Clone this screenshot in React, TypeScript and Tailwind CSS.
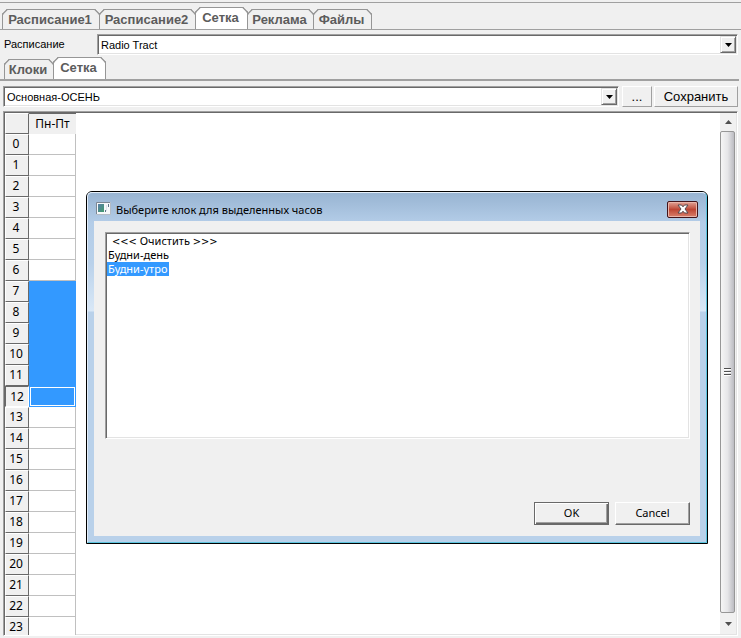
import * as React from "react";
import clsx from "clsx";

const SUNKEN =
  "border border-t-[#a0a0a0] border-l-[#a0a0a0] border-r-white border-b-white bg-white p-px shadow-[inset_1px_1px_#696969,inset_-1px_-1px_#e3e3e3]";
const RAISED =
  "border border-t-white border-l-white border-r-[#a0a0a0] border-b-[#a0a0a0] bg-[#f0f0f0]";

const mainTabs = [
  { label: "Расписание1", width: "w-[98px]" },
  { label: "Расписание2", width: "w-[97px]" },
  { label: "Сетка", width: "w-[53px]" },
  { label: "Реклама", width: "w-[67px]" },
  { label: "Файлы", width: "w-[59px]" },
];

const subTabs = [
  { label: "Клоки", width: "w-[50px]" },
  { label: "Сетка", width: "w-[53px]" },
];

const hours = Array.from({ length: 24 }, (_, hour) => hour);
const currentHour = 12;
const isSelected = (hour: number) => hour >= 7 && hour <= currentHour;

const Arrows: React.FC<{ children: string }> = ({ children }) => (
  <span className="font-['DejaVu_Sans_Condensed','DejaVu_Sans',sans-serif]">
    {children}
  </span>
);

const clocks = [
  {
    id: "clear",
    label: (
      <>
        <Arrows>{"<<<"}</Arrows> Очистить <Arrows>{">>>"}</Arrows>
      </>
    ),
  },
  { id: "day", label: "Будни-день" },
  { id: "morning", label: "Будни-утро" },
];

const Tabs: React.FC<{
  tabs: { label: string; width: string }[];
  active: string;
  thick?: boolean;
}> = ({ tabs, active, thick = false }) => (
  <div
    role="tablist"
    className={clsx(
      "flex items-end border-[#a0a0a0]",
      thick ? "border-b-2 pl-1" : "border-b pl-[2px]"
    )}
  >
    {tabs.map(({ label, width }) => (
      <button
        key={label}
        type="button"
        role="tab"
        aria-selected={label === active}
        className={clsx(
          "-mr-px shrink-0 rounded-t-[5px] [corner-shape:bevel] border border-b-0 border-[#969696] pr-[2px] text-center text-[13px] leading-[18px] font-bold whitespace-nowrap text-[#5c5c5c]",
          width,
          label === active ? "h-[22px] bg-white pb-[2px]" : "h-5 bg-[#f0f0f0]"
        )}
      >
        {label}
      </button>
    ))}
  </div>
);

const ComboBox: React.FC<{ id: string; label?: string; value: string }> = ({
  id,
  label,
  value,
}) => (
  <div className={clsx("flex h-[21px] min-w-0 flex-1", SUNKEN)}>
    <select
      id={id}
      aria-label={label}
      defaultValue={value}
      className="min-w-0 flex-1 appearance-none bg-transparent pt-px pl-[2px] text-[11px] leading-4 text-black outline-none"
    >
      <option>{value}</option>
    </select>
    <span className="pointer-events-none flex w-4 items-center justify-center border border-t-[#e3e3e3] border-r-[#696969] border-b-[#696969] border-l-[#e3e3e3] bg-[#f0f0f0] shadow-[inset_1px_1px_#fff,inset_-1px_-1px_#a0a0a0]">
      <svg width="7" height="4" viewBox="0 0 7 4" aria-hidden="true">
        <path d="M0 0h7L3.5 4z" fill="#000" />
      </svg>
    </span>
  </div>
);

const HourGrid = () => (
  <table className="w-[71px] table-fixed border-separate border-spacing-0 self-start font-['Noto_Sans',sans-serif] text-[12px] leading-4 text-black">
    <thead>
      <tr className="h-[21px]">
        <th
          aria-label="Час"
          className="w-6 border border-t-white border-l-white border-r-[#696969] border-b-[#696969] bg-[#f0f0f0] p-0"
        />
        <th
          scope="col"
          className="border-t border-t-[#696969] bg-[#f0f0f0] p-0 text-center font-normal"
        >
          Пн-Пт
        </th>
      </tr>
    </thead>
    <tbody>
      {hours.map((hour) => (
        <tr key={hour} className="h-[21px]">
          <th
            scope="row"
            className={clsx(
              "border bg-[#f0f0f0] p-0 text-center font-normal",
              hour === currentHour
                ? "border-t-[#696969] border-l-[#696969] border-r-white border-b-white"
                : "border-t-white border-l-white border-r-[#696969] border-b-[#696969] pr-[2px] pb-[2px]"
            )}
          >
            {hour}
          </th>
          <td
            className={clsx(
              "border-r border-b p-0",
              isSelected(hour)
                ? "border-[#3399ff] bg-[#3399ff]"
                : "border-[#c0c0c0] bg-white",
              hour === currentHour && "outline outline-white -outline-offset-2"
            )}
          />
        </tr>
      ))}
    </tbody>
  </table>
);

const ScrollBar = () => (
  <div
    aria-hidden="true"
    className="ml-auto flex w-4 flex-col items-center bg-[#f1f1f1]"
  >
    <span className="flex h-[18px] items-center">
      <svg width="7" height="4" viewBox="0 0 7 4">
        <path d="M0 4h7L3.5 0z" fill="#505050" />
      </svg>
    </span>
    <span className="flex w-[15px] flex-1 flex-col items-center justify-center gap-px self-start rounded-[2px] border border-[#979797] bg-linear-to-r from-[#f5f5f5] via-[#e6e6e8] to-[#bcbcc2]">
      <i className="h-[2px] w-[7px] border-b border-white bg-[#505050]" />
      <i className="h-[2px] w-[7px] border-b border-white bg-[#505050]" />
      <i className="h-[2px] w-[7px] border-b border-white bg-[#505050]" />
    </span>
    <span className="flex h-[21px] items-center">
      <svg width="7" height="4" viewBox="0 0 7 4">
        <path d="M0 0h7L3.5 4z" fill="#505050" />
      </svg>
    </span>
  </div>
);

const WindowIcon = () => (
  <svg width="15" height="13" viewBox="0 0 15 13" aria-hidden="true">
    <defs>
      <linearGradient id="screen" x1="0" y1="0" x2="1" y2="1">
        <stop offset="0" stopColor="#5b7fa8" />
        <stop offset="1" stopColor="#3f9a6c" />
      </linearGradient>
    </defs>
    <path d="M.5.5h14v12H.5z" fill="#f6f8fa" stroke="#b4bcc6" />
    <path d="M.5 12V.5H14" fill="none" stroke="#7c8794" />
    <path d="M2 2h6v8H2z" fill="url(#screen)" />
    <path d="M9 8h1v2H9zM12 2h1v3h-1z" fill="#5f7488" />
    <path d="M10 3h1v6h-1z" fill="#dde3ea" />
  </svg>
);

const ClockDialog = () => (
  <div
    role="dialog"
    aria-labelledby="dialog-title"
    className="absolute top-[191px] right-[33px] left-[86px] rounded-t-[6px] border border-black bg-[#b9d1ea] font-['Noto_Sans',sans-serif]"
  >
    <div className="rounded-t-[5px] border border-t-[#e4eef9] border-r-[#5cc4de] border-b-[#5cc4de] border-l-[#e4eef9] bg-[linear-gradient(to_bottom,#98b4d2,#b4cde8_30px,#b9d1ea_70px,#d9e8f7_118px,#b9d1ea_119px)] px-[6px] pb-[6px]">
      <div className="flex h-7 items-center pl-[2px]">
        <span className="pt-[2px]">
          <WindowIcon />
        </span>
        <h1 id="dialog-title" className="ml-[5px] pt-[5px] text-[11px] leading-4 text-black">
          Выберите клок для выделенных часов
        </h1>
        <button
          type="button"
          aria-label="Закрыть"
          className="mt-1 mr-[2px] ml-auto flex h-[17px] w-[31px] items-center justify-center rounded-[2px] border border-[#43141a] bg-linear-to-b from-[#e0a296] from-0% via-[#bd4534] via-50% to-[#d87f6c] shadow-[inset_0_0_0_1px_#e9b5aa]"
        >
          <svg width="12" height="10" viewBox="0 0 12 10" aria-hidden="true">
            <path
              d="M1 1h3.500L6 2.800 7.500 1H11L8 5l3 4H7.500L6 7.200 4.500 9H1l3-4z"
              fill="#fff"
              stroke="#54494f"
            />
          </svg>
        </button>
      </div>
      <div className="bg-[#f0f0f0] py-[11px] pr-[10px] pl-[11px]">
        <ul
          role="listbox"
          aria-labelledby="dialog-title"
          className={clsx("h-[207px] text-[11px] leading-[14px] text-black", SUNKEN)}
        >
          {clocks.map(({ id, label }) => (
            <li
              key={id}
              role="option"
              aria-selected={id === "morning"}
              className={clsx(
                "h-[14px] w-fit pr-[2px]",
                id === "clear" ? "pl-[5px]" : "pl-px",
                id === "morning" && "bg-[#3399ff] text-white"
              )}
            >
              {label}
            </li>
          ))}
        </ul>
        <div className="mt-[63px] flex justify-end gap-[6px] text-[11px] leading-4 text-black">
          <button
            type="button"
            className="h-[23px] w-[75px] border border-[#696969] bg-[#f0f0f0] pb-[2px] shadow-[inset_1px_1px_#fff,inset_-1px_-1px_#696969,inset_-2px_-2px_#a0a0a0]"
          >
            OK
          </button>
          <button
            type="button"
            className="h-[23px] w-[75px] border border-t-white border-r-[#696969] border-b-[#696969] border-l-white bg-[#f0f0f0] pb-[2px] shadow-[inset_-1px_-1px_#a0a0a0]"
          >
            Cancel
          </button>
        </div>
      </div>
    </div>
  </div>
);

const App = () => (
  <main className="relative flex h-screen flex-col overflow-hidden bg-[#f0f0f0] pt-[2px] pb-[2px] font-['Liberation_Sans',Arial,sans-serif] text-black">
    <div className="border-t border-[#a0a0a0] pt-1">
      <Tabs tabs={mainTabs} active="Сетка" />
    </div>
    <div className="mt-1 flex items-center pr-[3px] pl-1">
      <label htmlFor="schedule" className="w-[93px] pb-[2px] text-[11px] leading-4">
        Расписание
      </label>
      <ComboBox id="schedule" value="Radio Tract" />
    </div>
    <div className="mt-[2px] pr-[2px]">
      <Tabs tabs={subTabs} active="Сетка" thick />
    </div>
    <div className="mt-[5px] flex h-[21px] px-[3px]">
      <ComboBox id="grid" label="Сетка" value="Основная-ОСЕНЬ" />
      <button type="button" className={clsx("ml-[3px] w-[30px] text-[13px] leading-4", RAISED)}>
        ...
      </button>
      <button type="button" className={clsx("ml-[2px] w-[84px] text-[13px] leading-4", RAISED)}>
        Сохранить
      </button>
    </div>
    <div className="mt-1 flex min-h-0 flex-1 px-[3px]">
      <div className={clsx("flex min-w-0 flex-1 overflow-hidden", SUNKEN)}>
        <HourGrid />
        <ScrollBar />
      </div>
    </div>
    <ClockDialog />
  </main>
);

export default App;
